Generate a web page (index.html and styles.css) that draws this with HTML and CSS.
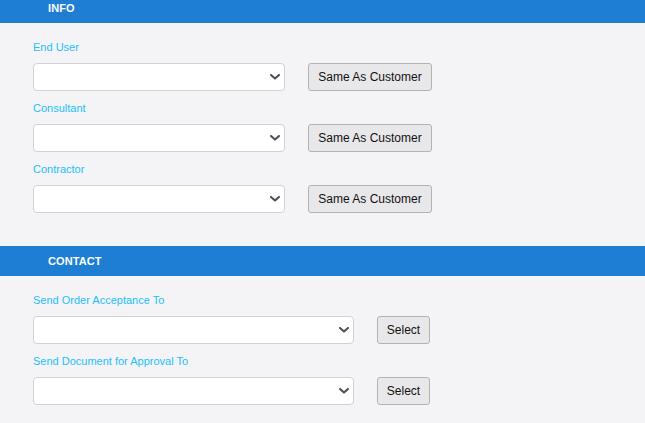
FILE: index.html
```html
<!DOCTYPE html>
<html>
<head>
<meta charset="utf-8">
<link rel="stylesheet" href="styles.css">
</head>
<body>
<div class="page">
  <div class="section-head">INFO</div>
  <div class="section-body">
    <div class="field">
      <div class="label">End User</div>
      <div class="row">
        <div class="select-wrap sw-info">
          <select class="select"><option></option></select>
          <svg class="chev" width="10" height="6" viewBox="0 0 10 6"><path d="M1 1 L5 4.6 L9 1" fill="none" stroke="#4a4d52" stroke-width="2" stroke-linecap="round" stroke-linejoin="round"/></svg>
        </div>
        <button class="btn btn-info">Same As Customer</button>
      </div>
    </div>
    <div class="field">
      <div class="label">Consultant</div>
      <div class="row">
        <div class="select-wrap sw-info">
          <select class="select"><option></option></select>
          <svg class="chev" width="10" height="6" viewBox="0 0 10 6"><path d="M1 1 L5 4.6 L9 1" fill="none" stroke="#4a4d52" stroke-width="2" stroke-linecap="round" stroke-linejoin="round"/></svg>
        </div>
        <button class="btn btn-info">Same As Customer</button>
      </div>
    </div>
    <div class="field">
      <div class="label">Contractor</div>
      <div class="row">
        <div class="select-wrap sw-info">
          <select class="select"><option></option></select>
          <svg class="chev" width="10" height="6" viewBox="0 0 10 6"><path d="M1 1 L5 4.6 L9 1" fill="none" stroke="#4a4d52" stroke-width="2" stroke-linecap="round" stroke-linejoin="round"/></svg>
        </div>
        <button class="btn btn-info">Same As Customer</button>
      </div>
    </div>
  </div>
  <div class="section-head">CONTACT</div>
  <div class="section-body">
    <div class="field">
      <div class="label">Send Order Acceptance To</div>
      <div class="row">
        <div class="select-wrap sw-contact">
          <select class="select"><option></option></select>
          <svg class="chev" width="10" height="6" viewBox="0 0 10 6"><path d="M1 1 L5 4.6 L9 1" fill="none" stroke="#4a4d52" stroke-width="2" stroke-linecap="round" stroke-linejoin="round"/></svg>
        </div>
        <button class="btn btn-contact">Select</button>
      </div>
    </div>
    <div class="field">
      <div class="label">Send Document for Approval To</div>
      <div class="row">
        <div class="select-wrap sw-contact">
          <select class="select"><option></option></select>
          <svg class="chev" width="10" height="6" viewBox="0 0 10 6"><path d="M1 1 L5 4.6 L9 1" fill="none" stroke="#4a4d52" stroke-width="2" stroke-linecap="round" stroke-linejoin="round"/></svg>
        </div>
        <button class="btn btn-contact">Select</button>
      </div>
    </div>
  </div>
</div>
</body>
</html>
```
FILE: styles.css
```css
html, body {
  margin: 0;
  padding: 0;
  background: #f4f4f6;
  font-family: "Liberation Sans", Arial, sans-serif;
  overflow: hidden;
}
.page {
  margin-top: -7px;
}
.section-head {
  height: 30px;
  line-height: 30px;
  background: #1d7ed3;
  color: #ffffff;
  font-weight: bold;
  font-size: 11px;
  padding-left: 48px;
  letter-spacing: 0.1px;
}
.section-body {
  padding: 17px 33px 23px;
}
.field {
  margin-bottom: 10px;
}
.label {
  font-size: 11px;
  line-height: 14px;
  height: 14px;
  color: #22c0fa;
  margin-bottom: 9px;
}
.row {
  display: flex;
  align-items: center;
}
.select-wrap {
  position: relative;
  height: 28px;
}
.sw-info {
  width: 252px;
  margin-right: 23px;
}
.sw-contact {
  width: 321px;
  margin-right: 23px;
}
.select {
  appearance: none;
  -webkit-appearance: none;
  box-sizing: border-box;
  width: 100%;
  height: 28px;
  background: #ffffff;
  border: 1px solid #cfd2d6;
  border-radius: 4px;
  margin: 0;
  padding: 0 8px;
  font-family: inherit;
  font-size: 12px;
}
.chev {
  position: absolute;
  right: 5px;
  top: 11px;
  pointer-events: none;
}
.btn {
  box-sizing: border-box;
  height: 28px;
  margin: 0;
  padding: 0;
  background: #e8e8ea;
  border: 1px solid #b3b3b5;
  border-radius: 3px;
  font-family: inherit;
  font-size: 12px;
  color: #111111;
}
.btn-info {
  width: 124px;
}
.btn-contact {
  width: 53px;
}
```
